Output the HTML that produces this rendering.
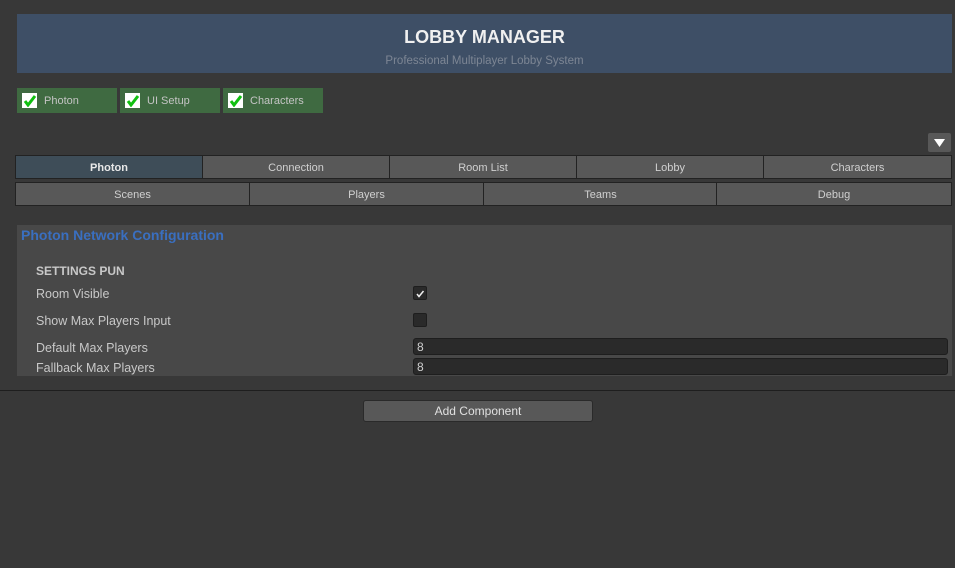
<!DOCTYPE html><html><head><style>
body{margin:0;width:955px;height:568px;background:#383838;font-family:"Liberation Sans",sans-serif;position:relative;overflow:hidden;color:#c8c8c8}
.a{position:absolute}
.hdr{left:17px;top:14px;width:935px;height:59px;background:#3e4f66;text-align:center}
.tg{top:88px;width:100px;height:25px;background:#3f6a41;font-size:11px;line-height:27px;color:#c4c4c4}
.tg i{position:absolute;left:5px;top:5px;width:15px;height:15px;background:#fff}
.tg span{position:absolute;left:27px}
.tab{box-sizing:border-box;background:#585858;border:1px solid #222;font-size:11px;color:#d0d0d0;text-align:center;line-height:24px;height:24px}
.lbl{left:36px;font-size:12.5px;color:#c8c8c8}
.fld{left:413px;width:535px;height:17px;background:#2a2a2a;border:1px solid #1e1e1e;border-radius:3px;box-sizing:border-box;font-size:12px;line-height:16px;padding-left:3px;color:#d0d0d0}
</style></head><body>
<div class="a hdr"><div style="font-weight:bold;font-size:18px;color:#f0f0f0;margin-top:13px">LOBBY MANAGER</div><div style="font-size:11.5px;color:#7d8694;margin-top:7px">Professional Multiplayer Lobby System</div></div>
<div class="a tg" style="left:17px"><i></i><svg class="a" style="left:6px;top:6px" width="14" height="13"><path d="M2 7 L5 11 L12 2" stroke="#10c010" stroke-width="3" fill="none"/></svg><span>Photon</span></div>
<div class="a tg" style="left:120px"><i></i><svg class="a" style="left:6px;top:6px" width="14" height="13"><path d="M2 7 L5 11 L12 2" stroke="#10c010" stroke-width="3" fill="none"/></svg><span>UI Setup</span></div>
<div class="a tg" style="left:223px"><i></i><svg class="a" style="left:6px;top:6px" width="14" height="13"><path d="M2 7 L5 11 L12 2" stroke="#10c010" stroke-width="3" fill="none"/></svg><span>Characters</span></div>
<div class="a" style="left:928px;top:133px;width:23px;height:19px;background:#585858;border-radius:2px"><svg width="23" height="19"><path d="M6 6 L17 6 L11.5 14Z" fill="#fff"/></svg></div>
<div class="a tab" style="left:15px;top:155px;width:188px;background:#3e4d58;font-weight:bold;color:#e8e8e8">Photon</div>
<div class="a tab" style="left:202px;top:155px;width:188px">Connection</div>
<div class="a tab" style="left:389px;top:155px;width:188px">Room List</div>
<div class="a tab" style="left:576px;top:155px;width:188px">Lobby</div>
<div class="a tab" style="left:763px;top:155px;width:189px">Characters</div>
<div class="a tab" style="left:15px;top:182px;width:235px">Scenes</div>
<div class="a tab" style="left:249px;top:182px;width:235px">Players</div>
<div class="a tab" style="left:483px;top:182px;width:235px">Teams</div>
<div class="a tab" style="left:716px;top:182px;width:236px">Debug</div>
<div class="a" style="left:17px;top:225px;width:935px;height:151px;background:#484848"></div>
<div class="a" style="left:21px;top:227px;font-size:14px;font-weight:bold;color:#3a6fc0">Photon Network Configuration</div>
<div class="a lbl" style="top:264px;font-weight:bold;font-size:12px">SETTINGS PUN</div>
<div class="a lbl" style="top:287px">Room Visible</div>
<div class="a" style="left:413px;top:286px;width:14px;height:14px;background:#2a2a2a;border:1px solid #1e1e1e;border-radius:2px;box-sizing:border-box"><svg width="12" height="12"><path d="M3 6 L5 8.5 L9.5 3" stroke="#eee" stroke-width="1.5" fill="none"/></svg></div>
<div class="a lbl" style="top:314px">Show Max Players Input</div>
<div class="a" style="left:413px;top:313px;width:14px;height:14px;background:#2a2a2a;border:1px solid #1e1e1e;border-radius:2px;box-sizing:border-box"></div>
<div class="a lbl" style="top:341px">Default Max Players</div>
<div class="a fld" style="top:338px">8</div>
<div class="a lbl" style="top:361px">Fallback Max Players</div>
<div class="a fld" style="top:358px">8</div>
<div class="a" style="left:0;top:390px;width:955px;height:1px;background:#1e1e1e"></div>
<div class="a" style="left:363px;top:400px;width:230px;height:22px;background:#585858;border:1px solid #2a2a2a;border-radius:3px;box-sizing:border-box;text-align:center;font-size:12px;line-height:20px;color:#e0e0e0">Add Component</div>
</body></html>
